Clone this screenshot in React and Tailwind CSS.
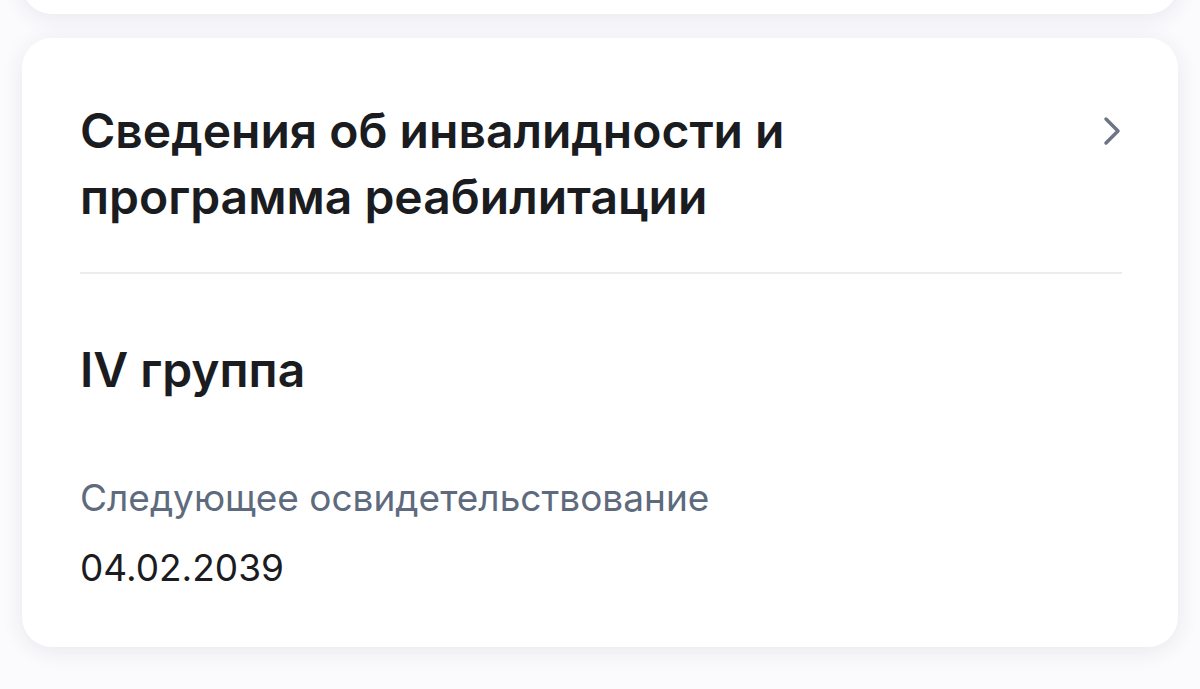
export default function App() {
  return (
    <div
      className="min-h-[689px] bg-[#fbfbfd] px-[22px] overflow-hidden"
      style={{ fontFamily: "Inter, 'Noto Sans', sans-serif" }}
    >
      <div className="mt-[-60px] h-[74px] rounded-[30px] bg-white shadow-[0_4px_22px_rgba(30,40,80,0.09)]" />

      <div className="mt-[24px] rounded-[30px] bg-white pl-[58px] pr-[56px] pt-[60px] pb-[57px] shadow-[0_4px_22px_rgba(30,40,80,0.09)]">
        <div className="flex items-start justify-between">
          <h2 className="text-[48px] leading-[66px] font-semibold text-[#1b1c1f]">
            Сведения об инвалидности и
            <br />
            программа реабилитации
          </h2>
          <svg
            width="20"
            height="30"
            viewBox="0 0 20 30"
            fill="none"
            className="mt-[18px]"
          >
            <path
              d="M4 3 L16 15 L4 27"
              stroke="#6d7585"
              strokeWidth="3.5"
              strokeLinecap="round"
              strokeLinejoin="round"
            />
          </svg>
        </div>

        <div className="mt-[42px] h-[2px] bg-[#ebecef]" />

        <div className="mt-[72px] text-[48px] leading-[48px] font-semibold text-[#1b1c1f]">
          IV группа
        </div>

        <div className="mt-[82px] text-[37px] leading-[44px] text-[#5e6a7d]">
          Следующее освидетельствование
        </div>
        <div className="mt-[26px] text-[37px] leading-[44px] text-[#1b1c1f]">
          04.02.2039
        </div>
      </div>
    </div>
  );
}
